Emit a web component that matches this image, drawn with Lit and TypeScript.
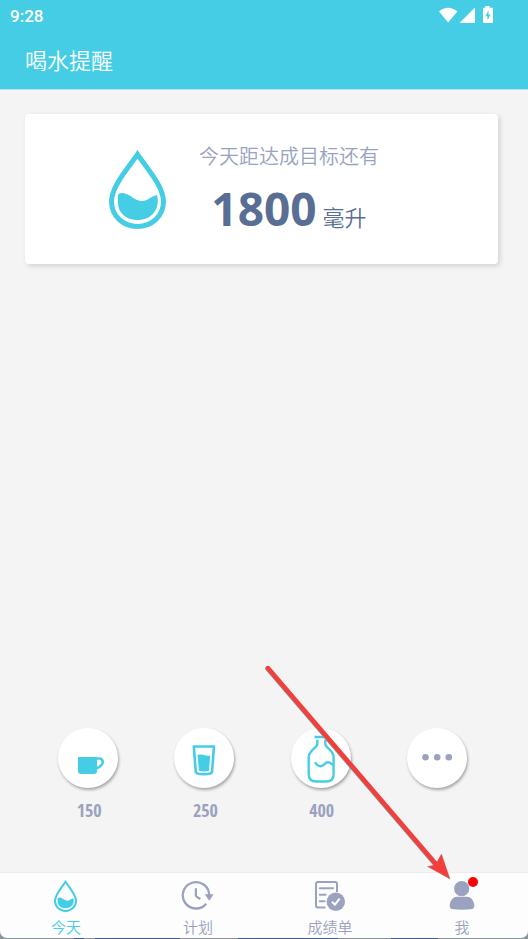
import { LitElement, html, css } from "lit";
import { customElement, property } from "lit/decorators.js";
import { classMap } from "lit/directives/class-map.js";

const drop = html`<svg viewBox="0 0 57 79" aria-hidden="true">
  <path d="M28.5 4.3C20 17 2.5 36 2.5 51.5C2.5 66 14 76.4 28.5 76.4S54.5 66 54.5 51.5C54.5 36 37 17 28.5 4.3Z" fill="none" stroke="currentColor" stroke-width="5"/>
  <path d="M9 44.5Q11.5 42.5 15 43.2C22 44.5 26 51 33 51C39 51 43 45.5 48 45C50 52 48 58 45.5 62C41 68 35 70 28.5 70C20 70 13.5 66 10.5 60C8.6 56 8.7 50 9 44.5Z" fill="currentColor"/>
</svg>`;

const cup = html`<svg viewBox="0 0 60 60" aria-hidden="true">
  <path d="M20 29H39V43Q39 46 36 46H23Q20 46 20 43Z" fill="currentColor"/>
  <path d="M38 30.5H41Q44.7 30.5 44.7 34Q44.7 38 38 40.5" fill="none" stroke="currentColor" stroke-width="2.6"/>
</svg>`;

const glass = html`<svg viewBox="0 0 60 60" aria-hidden="true">
  <path d="M19.8 18.5H40L38 44Q37.7 46.2 29.9 46.2T21.8 44Z" fill="none" stroke="currentColor" stroke-width="2.6" stroke-linejoin="round"/>
  <path d="M23.5 26.7Q29 26.4 31 27.2T36.2 27.4L35 42.7Q30 44.3 25 42.7Z" fill="currentColor"/>
</svg>`;

const bottle = html`<svg viewBox="0 0 60 60" aria-hidden="true" fill="none" stroke="currentColor" stroke-width="2.4">
  <path d="M23.5 9H37.5M26.3 11.7V16C26.3 20 17.7 22 17.7 29V46Q17.7 53.5 25.5 53.5H35Q42.6 53.5 42.6 46V29C42.6 22 34.3 20 34.3 16V11.7"/>
  <path d="M24.5 35Q26.5 38.3 29.5 38.2C33.5 38 33.5 34.3 37 34.3Q39.3 34.3 41.2 36.5" stroke-linecap="round"/>
</svg>`;

const dots = html`<svg viewBox="0 0 60 60" aria-hidden="true" fill="currentColor">
  <circle cx="18.5" cy="29.3" r="3.3"/><circle cx="30.2" cy="29.3" r="3.3"/><circle cx="41.8" cy="29.3" r="3.3"/>
</svg>`;

const clock = html`<svg viewBox="0 0 34 32" aria-hidden="true" fill="none" stroke="currentColor" stroke-width="2.3">
  <path d="M25.2 23.7A13.2 13.2 0 1 1 28.2 15"/>
  <path d="M14.9 8.3V15.5Q14.9 16.5 19.4 19" stroke-width="2.2"/>
  <path d="M23.7 14.2H32.7L28.2 20.7Z" fill="currentColor" stroke="none"/>
</svg>`;

const report = html`<svg viewBox="0 0 34 32" aria-hidden="true" fill="none" stroke="currentColor" stroke-width="2">
  <path d="M12.5 27.5H5Q3 27.5 3 25.5V4Q3 2 5 2H22Q24 2 24 4V12"/>
  <path d="M6.8 8.3H20M6.8 14.7H12.5M6.8 21.3H11.5" stroke-linecap="round"/>
  <circle cx="22.8" cy="21.8" r="9.2" fill="currentColor" stroke="none"/>
  <path class="tick" d="M19 21.8L21.9 24.7L26.6 18.7"/>
</svg>`;

const person = html`<svg viewBox="0 0 34 32" aria-hidden="true" fill="currentColor">
  <circle cx="16.7" cy="8.7" r="7.6"/>
  <path d="M12 16.7H22C26.5 16.7 29.3 21.5 29.3 26Q29.3 28.2 27.5 28.9Q23 29.7 17 29.7T6.5 28.9Q4.7 28.2 4.7 26C4.7 21.5 7.5 16.7 12 16.7Z"/>
</svg>`;

@customElement("amount-button")
class AmountButton extends LitElement {
  @property() amount = "";
  @property({ attribute: false }) icon: unknown;
  @property({ type: Boolean }) more = false;
  static styles = css`
    :host { display: block; }
    button {
      all: unset; box-sizing: border-box; cursor: pointer; width: 100%;
      display: flex; flex-direction: column; align-items: center; gap: 10px;
    }
    .disc {
      width: 60px; height: 60px; border-radius: 50%; background: #fff;
      color: #45cde6; box-shadow: 1px 2px 3px rgba(0, 0, 0, 0.32);
    }
    .more { color: #9aa2bf; }
    svg { display: block; width: 100%; height: 100%; }
    .label {
      height: 26px; color: #9aa2bf; padding-left: 2px;
      font: bold 18px/24px "Liberation Sans Narrow", "Open Sans Condensed", "Liberation Sans", sans-serif;
    }
  `;
  render() {
    return html`<button aria-label=${this.more ? "更多" : this.amount}>
      <span class=${classMap({ disc: true, more: this.more })}>${this.icon}</span>
      <span class="label">${this.amount}</span>
    </button>`;
  }
}

@customElement("app-root")
class AppRoot extends LitElement {
  static styles = css`
    :host {
      display: flex; flex-direction: column; position: relative;
      min-height: 100vh; background: #f4f4f4; overflow: hidden;
      font-family: "Noto Sans CJK SC DemiLight", "Noto Sans CJK SC", sans-serif; font-weight: 350;
    }
    svg { display: block; }
    header { background: #45cde6; color: #fff; padding-bottom: 3px; border-bottom: 1px solid #b4e6f0; }
    .status {
      display: flex; justify-content: space-between; align-items: center;
      height: 32px; padding: 0 33px 0 10px;
      font: 500 17px/32px Roboto, sans-serif;
    }
    .signals { width: 58px; height: 20px; margin-bottom: 2px; }
    h1 { margin: 0; padding-left: 25px; font-size: 22px; line-height: 54px; font-weight: inherit; }
    .card {
      display: flex; align-items: center; gap: 33px; margin: 24px 30px 0 25px;
      height: 150px; box-sizing: border-box; padding-left: 84px;
      background: #fff; border-radius: 4px; box-shadow: 2px 2px 5px rgba(0, 0, 0, 0.14);
    }
    .drop { width: 57px; height: 79px; color: #45cde6; flex: none; }
    .goal { text-align: center; padding-bottom: 2px; }
    .goal p { margin: 0 0 10px; font-size: 20px; line-height: 30px; color: #9aa2bf; }
    .total { display: flex; align-items: baseline; justify-content: center; gap: 6px; color: #586e94; font-size: 22px; line-height: 30px; }
    .total strong { font: bold 46px/54px "Noto Sans", sans-serif; }
    .amounts {
      display: grid; grid-template-columns: repeat(4, 1fr);
      margin: auto 33px 48px 30px;
    }
    nav {
      display: grid; grid-template-columns: repeat(4, 1fr);
      height: 65px; background: #fdfdfd; border-top: 1px solid #ececec;
      border-radius: 0 0 7px 7px;
    }
    .bottom {
      padding-bottom: 1px;
      background: linear-gradient(90deg, #8d949e 14%, #3f5a86 14% 16%, #8d949e 16% 18%, #3f5a86 18% 34%, #8d949e 34% 45%, #3f5a86 45% 64%, #8d949e 64% 74%, #3f5a86 74% 83%, #8d949e 83%);
    }
    nav a {
      display: flex; flex-direction: column; align-items: center;
      padding-top: 7px; color: #9aa2bf; text-decoration: none;
      font-size: 15px; line-height: 30px;
    }
    nav a.active { color: #45cde6; }
    .icon { position: relative; height: 32px; width: 34px; display: flex; justify-content: center; flex: none; }
    .icon svg { height: 32px; }
    .tick { stroke: #fff; }
    .badge { position: absolute; right: 1px; top: -3px; width: 10px; height: 10px; border-radius: 50%; background: #f00; }
    .pointer { position: absolute; right: 68px; bottom: 54px; width: 200px; height: 225px; pointer-events: none; }
  `;
  render() {
    const tabs = [
      { name: "今天", icon: drop, active: true },
      { name: "计划", icon: clock },
      { name: "成绩单", icon: report },
      { name: "我", icon: person, badge: true },
    ];
    return html`
      <header>
        <div class="status">
          <span>9:28</span>
          <svg class="signals" viewBox="0 0 58 20" fill="#fff" aria-hidden="true">
            <path d="M2 6.5Q11 -1 20.3 6.5L11.2 17.5Z"/>
            <path d="M22.5 18L38 2.5V18Z"/>
            <path fill-rule="evenodd" d="M49.3 1H53.7V2.8H56Q57 2.8 57 3.8V17Q57 18 56 18H48Q47 18 47 17V3.8Q47 2.8 48 2.8H49.3ZM52.5 5.5L49.3 11.3H51.5V15.3L54.6 9.5H52.5Z" transform="translate(-1 0)"/>
          </svg>
        </div>
        <h1>喝水提醒</h1>
      </header>
      <section class="card">
        <div class="drop">${drop}</div>
        <div class="goal">
          <p>今天距达成目标还有</p>
          <div class="total"><strong>1800</strong><span>毫升</span></div>
        </div>
      </section>
      <section class="amounts">
        <amount-button amount="150" .icon=${cup}></amount-button>
        <amount-button amount="250" .icon=${glass}></amount-button>
        <amount-button amount="400" .icon=${bottle}></amount-button>
        <amount-button more .icon=${dots}></amount-button>
      </section>
      <div class="bottom">
        <nav>
          ${tabs.map((t) => html`<a href="#" class=${classMap({ active: !!t.active })}>
            <span class="icon">${t.icon}${t.badge ? html`<i class="badge"></i>` : ""}</span>
            <span>${t.name}</span>
          </a>`)}
        </nav>
      </div>
      <svg class="pointer" viewBox="0 0 200 225" aria-hidden="true">
        <path d="M7.4 8.6L175.4 204.6" stroke="#8c8c8c" stroke-width="4.4" stroke-linecap="round"/>
        <path d="M8 8L176 204" stroke="#f43e3c" stroke-width="4.4" stroke-linecap="round"/>
        <path d="M190 219L181.5 194L177.5 201L173 205.5L167.5 206.5Z" fill="#f43e3c" stroke="#9a7070" stroke-width="0.4"/>
      </svg>
    `;
  }
}
